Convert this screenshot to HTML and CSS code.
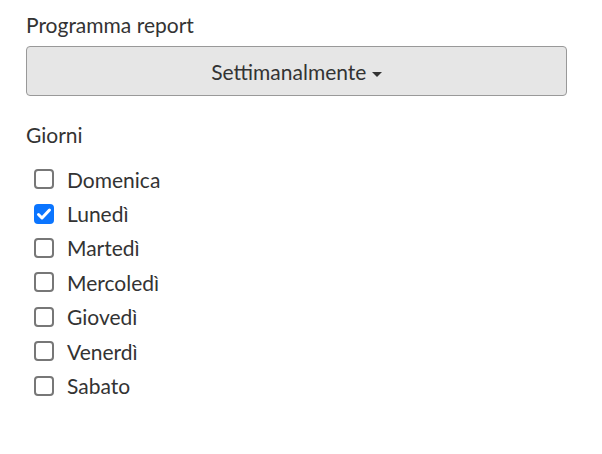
FILE: index.html
```html
<!DOCTYPE html>
<html lang="it">
<head>
  <meta charset="UTF-8">
  <title>Programma report</title>
  <link rel="stylesheet" href="styles.css">
</head>
<body>
  <form class="report-form">
    <div class="field">
      <label class="field-label">Programma report</label>
      <button type="button" class="dropdown-button">Settimanalmente <span class="caret"></span></button>
    </div>
    <div class="field">
      <div class="field-label days-label">Giorni</div>
      <ul class="day-list">
        <li><label><input type="checkbox"><span class="box"><svg viewBox="0 0 20 20"><path d="M4.5 10.5l3.5 3.5 7.5-8"/></svg></span>Domenica</label></li>
        <li><label><input type="checkbox" checked><span class="box"><svg viewBox="0 0 20 20"><path d="M4.5 10.5l3.5 3.5 7.5-8"/></svg></span>Lunedì</label></li>
        <li><label><input type="checkbox"><span class="box"><svg viewBox="0 0 20 20"><path d="M4.5 10.5l3.5 3.5 7.5-8"/></svg></span>Martedì</label></li>
        <li><label><input type="checkbox"><span class="box"><svg viewBox="0 0 20 20"><path d="M4.5 10.5l3.5 3.5 7.5-8"/></svg></span>Mercoledì</label></li>
        <li><label><input type="checkbox"><span class="box"><svg viewBox="0 0 20 20"><path d="M4.5 10.5l3.5 3.5 7.5-8"/></svg></span>Giovedì</label></li>
        <li><label><input type="checkbox"><span class="box"><svg viewBox="0 0 20 20"><path d="M4.5 10.5l3.5 3.5 7.5-8"/></svg></span>Venerdì</label></li>
        <li><label><input type="checkbox"><span class="box"><svg viewBox="0 0 20 20"><path d="M4.5 10.5l3.5 3.5 7.5-8"/></svg></span>Sabato</label></li>
      </ul>
    </div>
  </form>
</body>
</html>
```

FILE: styles.css
```css
body, html {
  margin: 0;
  padding: 0;
  background: #fff;
  font-family: Lato, "Open Sans", sans-serif;
  color: #333;
}
.report-form {
  padding: 12px 35px 0 26px;
}
.field {
  margin-bottom: 26px;
}
.field-label {
  display: block;
  font-size: 21px;
  line-height: 26px;
  margin-bottom: 8px;
}
.days-label {
  margin-bottom: 14px;
}
.dropdown-button {
  width: 100%;
  height: 50px;
  font-family: inherit;
  font-size: 21px;
  color: #333;
  background: #e6e6e6;
  border: 1px solid #999;
  border-radius: 4px;
  cursor: pointer;
}
.caret {
  display: inline-block;
  width: 0;
  height: 0;
  margin-left: 0;
  vertical-align: middle;
  border-top: 5px solid #333;
  border-left: 5px solid transparent;
  border-right: 5px solid transparent;
}
.day-list {
  list-style: none;
  margin: 0;
  padding: 0 0 0 8px;
}
.day-list li {
  height: 34.4px;
  display: flex;
  align-items: center;
}
.day-list label {
  display: flex;
  align-items: center;
  font-size: 21px;
  cursor: pointer;
}
.day-list input {
  display: none;
}
.box {
  box-sizing: border-box;
  width: 20px;
  height: 20px;
  margin-right: 13px;
  border: 2px solid #777;
  border-radius: 4px;
  background: #fff;
  display: flex;
}
.box svg {
  width: 100%;
  height: 100%;
  fill: none;
  stroke: #fff;
  stroke-width: 3;
  stroke-linecap: round;
  stroke-linejoin: round;
  visibility: hidden;
}
input:checked + .box {
  background: #0b75ff;
  border: none;
}
input:checked + .box svg {
  visibility: visible;
}
```
